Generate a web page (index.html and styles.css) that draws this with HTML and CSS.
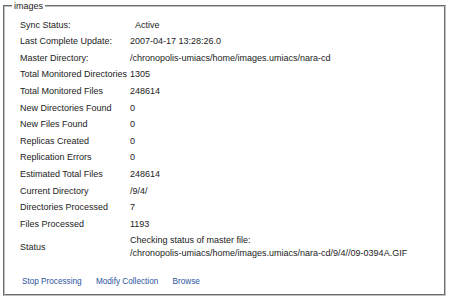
FILE: index.html
```html
<!DOCTYPE html>
<html lang="en">
<head>
  <meta charset="UTF-8">
  <title>images</title>
  <link rel="stylesheet" href="styles.css">
</head>
<body>
  <fieldset class="collection">
    <legend>images</legend>
    <table class="status-table">
      <tr><td class="label">Sync Status:</td><td><span class="active">Active</span></td></tr>
      <tr><td class="label">Last Complete Update:</td><td>2007-04-17 13:28:26.0</td></tr>
      <tr><td class="label">Master Directory:</td><td>/chronopolis-umiacs/home/images.umiacs/nara-cd</td></tr>
      <tr><td class="label">Total Monitored Directories</td><td>1305</td></tr>
      <tr><td class="label">Total Monitored Files</td><td>248614</td></tr>
      <tr><td class="label">New Directories Found</td><td>0</td></tr>
      <tr><td class="label">New Files Found</td><td>0</td></tr>
      <tr><td class="label">Replicas Created</td><td>0</td></tr>
      <tr><td class="label">Replication Errors</td><td>0</td></tr>
      <tr><td class="label">Estimated Total Files</td><td>248614</td></tr>
      <tr><td class="label">Current Directory</td><td>/9/4/</td></tr>
      <tr><td class="label">Directories Processed</td><td>7</td></tr>
      <tr><td class="label">Files Processed</td><td>1193</td></tr>
      <tr><td class="label">Status</td><td>Checking status of master file:<br>/chronopolis-umiacs/home/images.umiacs/nara-cd/9/4//09-0394A.GIF</td></tr>
    </table>
    <div class="actions">
      <a href="#">Stop Processing</a>
      <a href="#">Modify Collection</a>
      <a href="#">Browse</a>
    </div>
  </fieldset>
</body>
</html>
```

FILE: styles.css
```css
body {
  margin: 0;
  font-family: "Liberation Sans", Arial, sans-serif;
  font-size: 9px;
  line-height: 12.6px;
  color: #222;
  background-color: #fff;
}

.collection {
  margin: 0 4px 0 3px;
  padding: 3px 15px 6px 15px;
  border: 2px groove #c0c0c0;
}

.collection legend {
  padding: 0 2px;
  margin-left: -8px;
}

.status-table {
  border-collapse: separate;
  border-spacing: 0 2px;
}

.status-table td {
  padding: 1px 0;
  vertical-align: middle;
}

.status-table .label {
  width: 110px;
}

.active {
  margin-left: 5px;
}

.actions {
  margin-top: 13px;
  padding-left: 2px;
  font-size: 8.2px;
}

.actions a {
  color: #2c55a0;
  text-decoration: none;
  margin-right: 12px;
}
```
